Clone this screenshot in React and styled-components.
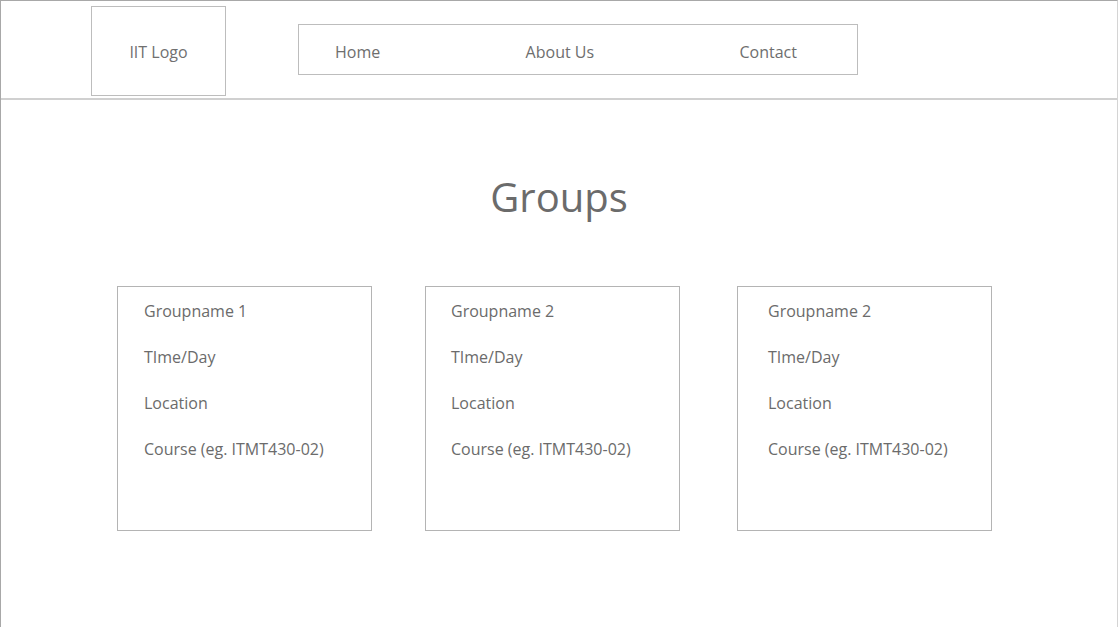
import styled, { createGlobalStyle } from "styled-components";

const GlobalStyle = createGlobalStyle`
    html, body {
        margin: 0;
        padding: 0;
        background: #fff;
    }
    body {
        font-family: "Open Sans", "Noto Sans", sans-serif;
        color: #666;
    }
`;

const Page = styled.div`
    box-sizing: border-box;
    width: 1118px;
    height: 627px;
    border-top: 1px solid #a8a8a8;
    border-left: 1px solid #a8a8a8;
    border-right: 1px solid #d4d4d4;
    overflow: hidden;
`;

const Header = styled.header`
    box-sizing: border-box;
    height: 99px;
    display: flex;
    align-items: flex-start;
    padding-left: 90px;
    border-bottom: 2px solid #d0d0d0;
`;

const LogoBox = styled.div`
    box-sizing: border-box;
    width: 135px;
    height: 90px;
    margin-top: 5px;
    padding-top: 2px;
    border: 1px solid #bdbdbd;
    display: flex;
    align-items: center;
    justify-content: center;
    font-size: 16px;
    color: #707070;
`;

const Nav = styled.nav`
    box-sizing: border-box;
    width: 560px;
    height: 51px;
    margin-top: 23px;
    margin-left: 72px;
    border: 1px solid #bdbdbd;
    display: flex;
    align-items: center;
    justify-content: space-between;
    padding: 5px 60px 0 36px;
`;

const NavLink = styled.span`
    font-size: 16px;
    color: #6e6e6e;
`;

const Main = styled.main`
    display: flex;
    flex-direction: column;
    align-items: center;
`;

const Title = styled.h1`
    margin: 70px 0 0;
    font-size: 40px;
    font-weight: 400;
    line-height: 54px;
    color: #6b6b6b;
`;

const CardRow = styled.div`
    align-self: stretch;
    display: flex;
    padding-left: 116px;
    margin-top: 62px;
`;

const Card = styled.div`
    box-sizing: border-box;
    width: 255px;
    height: 245px;
    margin-left: ${props => props.$gap}px;
    border: 1px solid #b4b4b4;
    padding: 1px 0 0 ${props => props.$inset}px;
`;

const Line = styled.div`
    font-size: 16px;
    line-height: 46px;
    color: #6b6b6b;
`;

const groups = [
    { name: "Groupname 1", gap: 0, inset: 26 },
    { name: "Groupname 2", gap: 53, inset: 25 },
    { name: "Groupname 2", gap: 57, inset: 30 }
];

export default function App() {
    return (
        <>
            <GlobalStyle />
            <Page>
                <Header>
                    <LogoBox>IIT Logo</LogoBox>
                    <Nav>
                        <NavLink>Home</NavLink>
                        <NavLink>About Us</NavLink>
                        <NavLink>Contact</NavLink>
                    </Nav>
                </Header>
                <Main>
                    <Title>Groups</Title>
                    <CardRow>
                        {groups.map((g, i) => (
                            <Card key={i} $gap={g.gap} $inset={g.inset}>
                                <Line>{g.name}</Line>
                                <Line>TIme/Day</Line>
                                <Line>Location</Line>
                                <Line>Course (eg. ITMT430-02)</Line>
                            </Card>
                        ))}
                    </CardRow>
                </Main>
            </Page>
        </>
    );
}
